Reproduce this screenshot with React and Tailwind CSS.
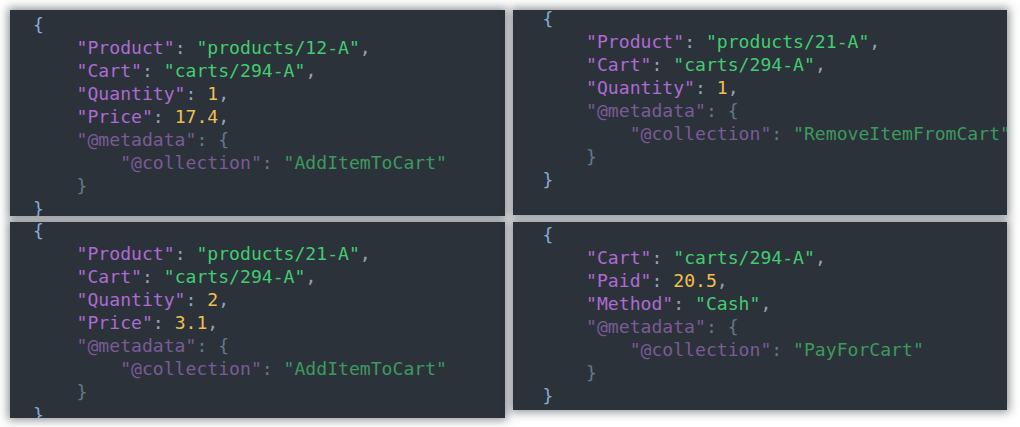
import React from "react";

const C = {
  key: "text-[#ad6bd3]",
  str: "text-[#42cc70]",
  num: "text-[#f0c04f]",
  punc: "text-[#95a3b0]",
  brace: "text-[#86acd6]",
  metaKey: "text-[#7a5b96]",
  metaPunc: "text-[#66788a]",
  metaStr: "text-[#3c9a5e]",
};

// token helpers
const k = (t) => [C.key, `"${t}"`];
const s = (t) => [C.str, `"${t}"`];
const n = (t) => [C.num, t];
const p = (t) => [C.punc, t];

const field = (key, val, last) => [
  [null, "    "],
  k(key),
  p(": "),
  val,
  ...(last ? [] : [p(",")]),
];

const metaBlock = (collection) => [
  [[null, "    "], [C.metaKey, '"@metadata"'], [C.metaPunc, ": {"]],
  [[null, "        "], [C.metaKey, '"@collection"'], [C.metaPunc, ": "], [C.metaStr, `"${collection}"`]],
  [[null, "    "], [C.metaPunc, "}"]],
];

const panels = [
  {
    cls: "h-[206px] pl-[23px] pt-[3px]",
    lines: [
      [[C.brace, "{"]],
      field("Product", s("products/12-A")),
      field("Cart", s("carts/294-A")),
      field("Quantity", n("1")),
      field("Price", n("17.4")),
      ...metaBlock("AddItemToCart"),
      [[C.brace, "}"]],
    ],
  },
  {
    cls: "h-[205px] pl-[30px]",
    shift: "-mt-[3px]",
    lines: [
      [[C.brace, "{"]],
      field("Product", s("products/21-A")),
      field("Cart", s("carts/294-A")),
      field("Quantity", n("1")),
      ...metaBlock("RemoveItemFromCart"),
      [[C.brace, "}"]],
    ],
  },
  {
    cls: "h-[196px] pl-[23px]",
    shift: "-mt-[3px]",
    lines: [
      [[C.brace, "{"]],
      field("Product", s("products/21-A")),
      field("Cart", s("carts/294-A")),
      field("Quantity", n("2")),
      field("Price", n("3.1")),
      ...metaBlock("AddItemToCart"),
      [[C.brace, "}"]],
    ],
  },
  {
    cls: "h-[188px] pl-[30px] pt-[1px]",
    lines: [
      [[C.brace, "{"]],
      field("Cart", s("carts/294-A")),
      field("Paid", n("20.5")),
      field("Method", s("Cash")),
      ...metaBlock("PayForCart"),
      [[C.brace, "}"]],
    ],
  },
];

const CodePanel = ({ panel }) => {
  return (
    <div
      className={`overflow-hidden bg-[#2c323a] shadow-[0_0_9px_2px_rgba(44,50,58,0.55)] ${panel.cls}`}
    >
      <div className={`whitespace-pre text-[18.1px] leading-[23px] ${panel.shift || ""}`}>
        {panel.lines.map((line, i) => (
          <div key={i}>
            {line.map(([color, text], j) => (
              <span key={j} className={color || ""}>
                {text}
              </span>
            ))}
          </div>
        ))}
      </div>
    </div>
  );
};

export default function App() {
  return (
    <div
      className="w-[1020px] h-[427px] bg-white pl-[10px] pr-[13px] pt-[10px]"
      style={{ fontFamily: '"DejaVu Sans Mono", "Liberation Mono", monospace' }}
    >
      <div className="grid grid-cols-2 items-start gap-x-[8px] gap-y-[6px]">
        {panels.map((panel, i) => (
          <CodePanel key={i} panel={panel} />
        ))}
      </div>
    </div>
  );
}
